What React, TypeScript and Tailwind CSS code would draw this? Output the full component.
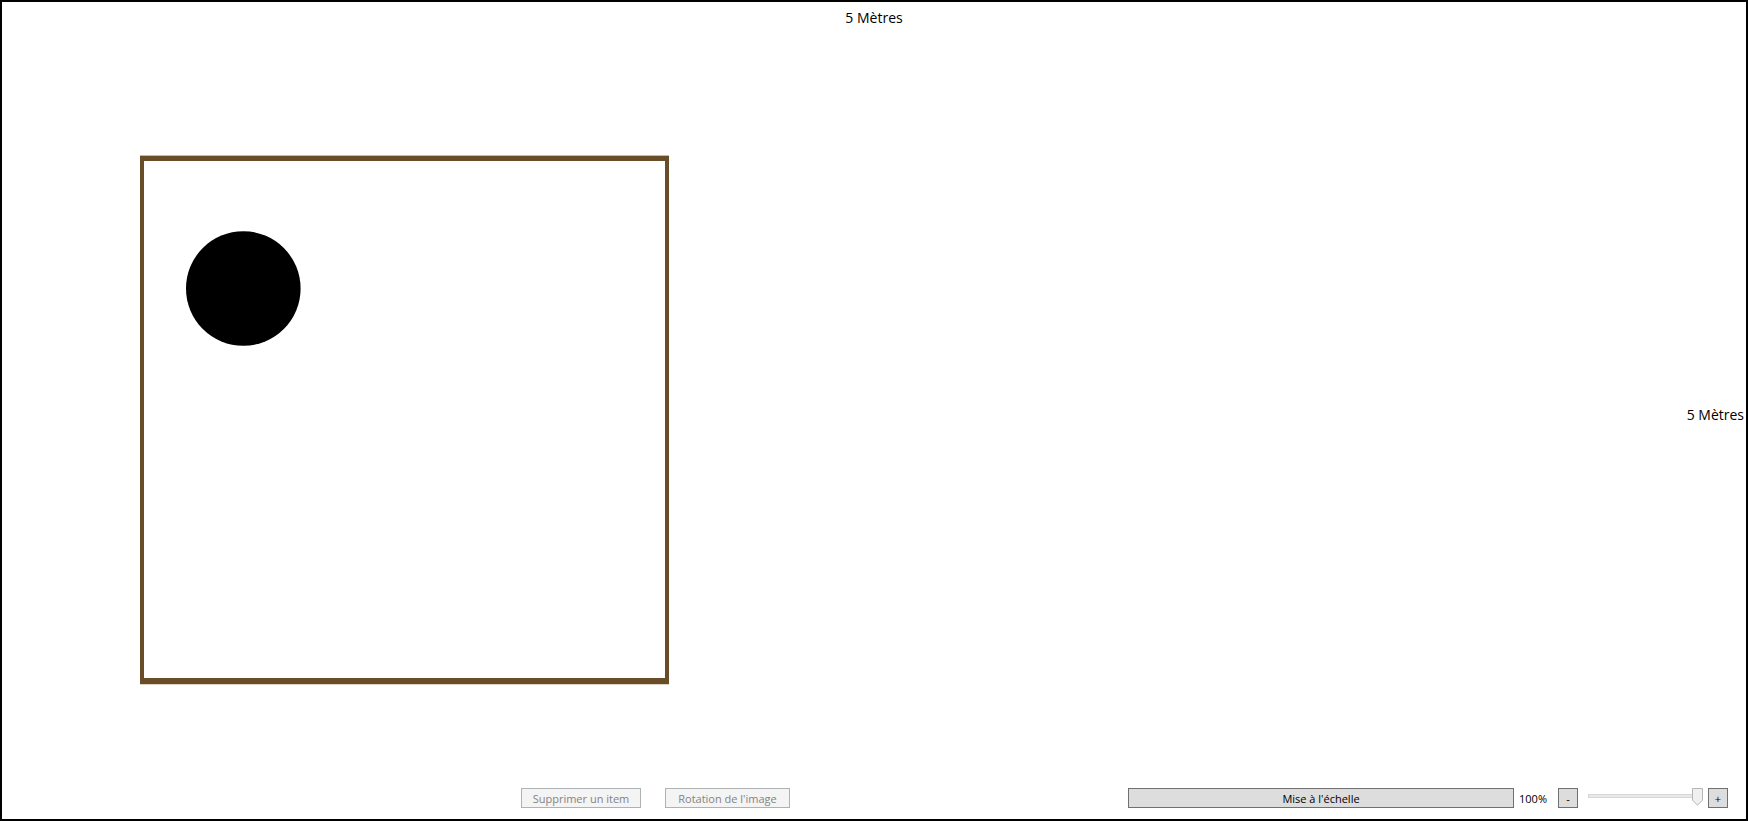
import { useState } from "react";

const toolButton =
  "h-5 border border-[#707070] bg-[#dddddd] pt-px text-center text-[11px] leading-4 text-black disabled:border-[#adb2b5] disabled:bg-[#f4f4f4] disabled:text-[#838383]";

function ZoomSlider({ value, onChange }: { value: number; onChange: (v: number) => void }) {
  return (
    <div className="relative h-5 w-[115px]">
      <div className="flex h-5 items-start pt-1.5">
        <div className="h-1 w-full border border-[#d6d6d6] bg-[#e7eaea]" />
      </div>
      <div className="absolute inset-y-0 left-0 right-[11px]">
        <svg
          className="absolute top-0 h-[18px] w-[11px]"
          style={{ left: `${value}%` }}
          viewBox="0 0 11 18"
          aria-hidden="true"
        >
          <path d="M.5 .5H10.5V12.2L5.5 17.2L.5 12.2Z" fill="#f0f0f0" stroke="#b5b5b5" />
        </svg>
      </div>
      <input
        type="range"
        min={0}
        max={100}
        value={value}
        aria-label="Zoom"
        onChange={(e) => onChange(Number(e.target.value))}
        className="absolute inset-0 h-5 w-full opacity-0"
      />
    </div>
  );
}

export default function App() {
  const [zoom, setZoom] = useState(100);

  return (
    <main className="flex min-h-screen flex-col border-2 border-black bg-white font-['Open_Sans','Noto_Sans',sans-serif] text-black">
      <section className="relative flex flex-1 flex-col">
        <p className="pt-1.5 text-center text-sm leading-5">5 Mètres</p>
        <div className="absolute inset-y-0 right-0 flex items-center pt-10 pr-0.5">
          <p className="text-sm leading-5">5 Mètres</p>
        </div>
        <div className="absolute top-[153px] left-[138px] h-[530px] w-[529px] border-y border-t-[#c5bcae] border-b-[#ddd3c7]">
          <div className="h-full w-full border-x-4 border-t-[5px] border-b-[6px] border-[#694d29]" />
        </div>
        <svg
          className="absolute top-[229px] left-[184px] h-[115px] w-[115px]"
          viewBox="0 0 115 115"
          aria-hidden="true"
        >
          <circle cx="57.3" cy="57.5" r="57.3" fill="#000" />
        </svg>
      </section>

      <footer className="grid grid-cols-[519fr_auto_338fr_386fr_auto] items-center pr-[18px] pb-[11px]">
        <div className="col-start-2 flex gap-6">
          <button type="button" disabled className={`${toolButton} w-[120px]`}>
            Supprimer un item
          </button>
          <button type="button" disabled className={`${toolButton} w-[125px]`}>
            Rotation de l'image
          </button>
        </div>
        <button type="button" className={`${toolButton} col-start-4`}>
          Mise à l'échelle
        </button>
        <div className="flex items-center">
          <output className="h-5 w-11 pt-px pl-[5px] text-[11px] leading-5">{zoom}%</output>
          <button
            type="button"
            aria-label="Zoom arrière"
            onClick={() => setZoom(Math.max(0, zoom - 10))}
            className={`${toolButton} mr-2.5 w-5`}
          >
            -
          </button>
          <ZoomSlider value={zoom} onChange={setZoom} />
          <button
            type="button"
            aria-label="Zoom avant"
            onClick={() => setZoom(Math.min(100, zoom + 10))}
            className={`${toolButton} ml-[5px] w-5`}
          >
            +
          </button>
        </div>
      </footer>
    </main>
  );
}
